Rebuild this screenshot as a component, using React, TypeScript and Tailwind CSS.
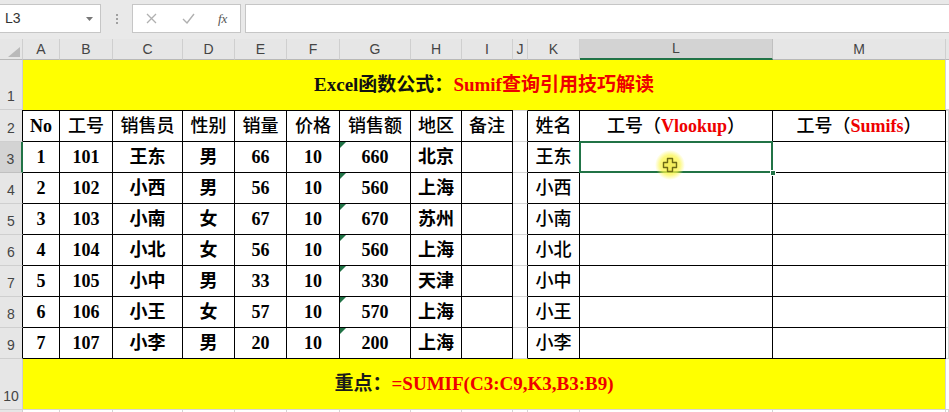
import React from 'react';

const letters = ['A', 'B', 'C', 'D', 'E', 'F', 'G', 'H', 'I', 'J', 'K', 'L', 'M'];

const data = [
  ['1', '101', '王东', '男', '66', '10', '660', '北京'],
  ['2', '102', '小西', '男', '56', '10', '560', '上海'],
  ['3', '103', '小南', '女', '67', '10', '670', '苏州'],
  ['4', '104', '小北', '女', '56', '10', '560', '上海'],
  ['5', '105', '小中', '男', '33', '10', '330', '天津'],
  ['6', '106', '小王', '女', '57', '10', '570', '上海'],
  ['7', '107', '小李', '男', '20', '10', '200', '上海'],
];

const headers = ['No', '工号', '销售员', '性别', '销量', '价格', '销售额', '地区', '备注'];

// table A2:I9 and K2:M9
function inTable(r: number, c: number) {
  return r >= 2 && r <= 9 && ((c >= 0 && c <= 8) || (c >= 10 && c <= 12));
}

function Cursor() {
  return (
    <svg width="34" height="34" viewBox="-17 -17 34 34" className="absolute left-[73px] top-[6px] z-20 pointer-events-none">
      <defs>
        <radialGradient id="glow">
          <stop offset="0%" stopColor="#fbf547" stopOpacity="0.95" />
          <stop offset="65%" stopColor="#fbf547" stopOpacity="0.7" />
          <stop offset="100%" stopColor="#fbf547" stopOpacity="0" />
        </radialGradient>
      </defs>
      <circle r="15" fill="url(#glow)" />
      <path d="M-2.5,-6.5 H2.5 V-2.5 H6.5 V2.5 H2.5 V6.5 H-2.5 V2.5 H-6.5 V-2.5 H-2.5 Z" fill="#f4ee5c" stroke="#6e6a14" strokeWidth="1.4" strokeLinejoin="round" />
    </svg>
  );
}

function TextFlag() {
  return (
    <svg width="6" height="6" className="absolute left-0 top-0">
      <polygon points="0,0 6,0 0,6" fill="#217346" />
    </svg>
  );
}

function content(r: number, c: number) {
  if (r === 2) {
    if (c <= 8) {
      return c === 0 ? <span className="font-bold">No</span> : <span className="font-medium">{headers[c]}</span>;
    }
    if (c === 10) return <span className="font-medium">姓名</span>;
    if (c === 11)
      return (
        <span className="font-medium">
          工号（<span className="font-bold text-[#ee0000]">Vlookup</span>）
        </span>
      );
    if (c === 12)
      return (
        <span className="font-medium">
          工号（<span className="font-bold text-[#ee0000]">Sumifs</span>）
        </span>
      );
    return null;
  }
  const row = data[r - 3];
  if (c <= 7) return <span className="font-bold">{row[c]}</span>;
  if (c === 10) return <span className="font-medium">{row[2]}</span>;
  return null;
}

export default function App() {
  const rows = [2, 3, 4, 5, 6, 7, 8, 9];
  return (
    <div className="w-[949px] h-[412px] overflow-hidden bg-white font-['Liberation_Sans','Noto_Sans_CJK_SC',sans-serif]">
      {/* formula bar */}
      <div className="h-[39px] bg-[#e9e9e9] flex items-start pt-[4px]">
        <div className="w-[101px] h-[29px] bg-white border border-l-0 border-[#c6c6c6] flex items-center justify-between pl-[5px] pr-[7px]">
          <span className="text-[14px] text-[#333]">L3</span>
          <svg width="7" height="4"><polygon points="0,0 7,0 3.5,4" fill="#777" /></svg>
        </div>
        <div className="w-[31px] h-[29px] flex flex-col items-center justify-center gap-[2px]">
          <div className="w-[2px] h-[2px] bg-[#a0a0a0]" />
          <div className="w-[2px] h-[2px] bg-[#a0a0a0]" />
          <div className="w-[2px] h-[2px] bg-[#a0a0a0]" />
        </div>
        <div className="w-[109px] h-[29px] bg-white border border-[#c6c6c6] flex items-center pl-[13px]">
          <svg width="11" height="11" viewBox="0 0 11 11">
            <path d="M1,1 L10,10 M10,1 L1,10" stroke="#b0b0b0" strokeWidth="1.3" />
          </svg>
          <svg width="13" height="11" viewBox="0 0 13 11" className="ml-[25px]">
            <path d="M1,6 L5,10 L12,1" stroke="#b0b0b0" strokeWidth="1.4" fill="none" />
          </svg>
          <span className="ml-[23px] text-[13px] italic text-[#555] font-['Liberation_Serif',serif]">fx</span>
        </div>
        <div className="ml-[4px] flex-1 h-[29px] bg-white border border-r-0 border-[#c6c6c6]" />
      </div>

      {/* sheet grid */}
      <div className="grid grid-cols-[23px_37px_53px_70px_52px_52px_53px_71px_51px_51px_15px_52px_193px_173px_3px] grid-rows-[21px_50px_32px_31px_31px_31px_31px_31px_31px_31px_51px_20px]">
        {/* column header row */}
        <div className="bg-[#e6e6e6] border-r border-b border-r-[#cfcfcf] border-b-[#b8b8b8] relative">
          <svg width="23" height="21" className="absolute left-0 top-0">
            <polygon points="20,8 20,18 8,18" fill="#b9b9b9" />
          </svg>
        </div>
        {letters.map((l) =>
          l === 'L' ? (
            <div key={l} className="bg-[#d3d3d3] border-r border-r-[#c0c0c0] border-b-2 border-b-[#217346] flex items-center justify-center text-[14px] text-[#444]">
              {l}
            </div>
          ) : (
            <div key={l} className="bg-[#e6e6e6] border-r border-b border-r-[#cfcfcf] border-b-[#b8b8b8] flex items-center justify-center text-[14px] text-[#444]">
              {l}
            </div>
          )
        )}
        <div className="bg-[#e6e6e6] border-b border-b-[#b8b8b8]" />

        {/* row 1 */}
        <div className="bg-[#e6e6e6] border-r border-b border-r-[#cfcfcf] border-b-[#cfcfcf] flex items-end justify-center pb-[2px] text-[14px] text-[#444]">1</div>
        <div className="col-span-13 bg-[#ffff00] border-r border-r-[#d4d4d4] flex items-center justify-center text-[19px] font-bold font-['Liberation_Serif','Noto_Sans_CJK_SC',serif] text-[#111]">
          <span>
            Excel函数公式：<span className="text-[#ee0000]">Sumif查询引用技巧解读</span>
          </span>
        </div>
        <div className="border-b border-b-[#d4d4d4]" />

        {/* rows 2-9 */}
        {rows.map((r) => (
          <React.Fragment key={r}>
            {r === 3 ? (
              <div className="bg-[#d3d3d3] border-r-2 border-b border-r-[#217346] border-b-[#c0c0c0] flex items-end justify-center pb-[2px] text-[14px] text-[#444]">3</div>
            ) : (
              <div className="bg-[#e6e6e6] border-r border-b border-r-black border-b-[#cfcfcf] flex items-end justify-center pb-[2px] text-[14px] text-[#444]">{r}</div>
            )}
            {Array.from({ length: 14 }).map((_, c) => {
              const right = inTable(r, c) || inTable(r, c + 1) ? 'border-r-black' : 'border-r-[#d4d4d4]';
              const bottom = inTable(r, c) || inTable(r + 1, c) ? 'border-b-black' : 'border-b-[#d4d4d4]';
              const top = r === 2 ? (inTable(r, c) ? 'border-t border-t-black' : 'border-t border-t-[#d4d4d4]') : '';
              return (
                <div
                  key={c}
                  className={`relative border-r border-b ${right} ${bottom} ${top} flex items-center justify-center text-[18px] text-black font-['Liberation_Serif','Noto_Sans_CJK_SC',serif] whitespace-nowrap`}
                >
                  {content(r, c)}
                  {c === 6 && r >= 3 && <TextFlag />}
                  {c === 11 && r === 3 && (
                    <>
                      <div className="absolute -inset-px border-2 border-[#217346] z-10 pointer-events-none" />
                      <div className="absolute right-[-4px] bottom-[-4px] w-[6px] h-[6px] bg-[#217346] border border-white z-10" />
                      <Cursor />
                    </>
                  )}
                </div>
              );
            })}
          </React.Fragment>
        ))}

        {/* row 10 */}
        <div className="bg-[#e6e6e6] border-r border-b border-r-[#cfcfcf] border-b-[#cfcfcf] flex items-end justify-center pb-[2px] text-[14px] text-[#444]">10</div>
        <div className="col-span-13 bg-[#ffff00] border-r border-b border-r-[#d4d4d4] border-b-[#d4d4d4] flex items-center justify-center pr-[20px] text-[19px] font-bold font-['Liberation_Serif','Noto_Sans_CJK_SC',serif] text-[#1a1a1a]">
          <span>
            重点：<span className="text-[#ee0000]">=SUMIF(C3:C9,K3,B3:B9)</span>
          </span>
        </div>
        <div className="border-b border-b-[#d4d4d4]" />

        {/* row 11 (cut off) */}
        <div className="bg-[#e6e6e6] border-r border-r-[#cfcfcf]" />
        {Array.from({ length: 14 }).map((_, c) => (
          <div key={c} className="border-r border-r-[#d4d4d4]" />
        ))}
      </div>
    </div>
  );
}
